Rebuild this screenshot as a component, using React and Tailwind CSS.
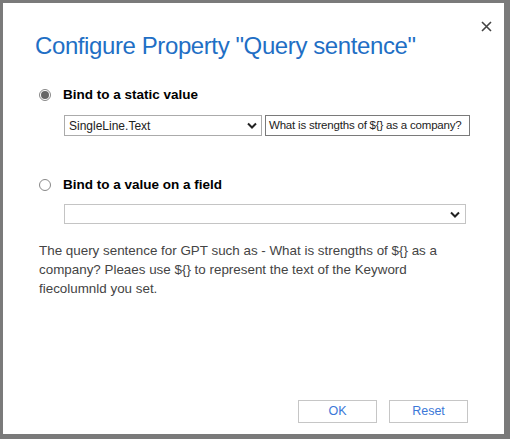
import React from "react";

export default function App() {
  return (
    <div className="w-[510px] h-[439px] bg-[#7a7a7a] pl-[3px] pt-[3px] overflow-hidden" style={{ fontFamily: '"Open Sans", "Liberation Sans", sans-serif' }}>
      <div className="relative w-[501px] h-[431px] bg-white">
        <button className="absolute left-[477px] top-[17px] w-[12px] h-[12px] flex items-center justify-center">
          <svg width="11" height="11" viewBox="0 0 11 11">
            <path d="M1 1 L10 10 M10 1 L1 10" stroke="#444" strokeWidth="1.6" />
          </svg>
        </button>
        <div className="pl-[32px] pt-[28px]">
          <h1 className="text-[24px] leading-[30px] text-[#1f6fc5] tracking-[-0.4px]" style={{ fontFamily: '"Liberation Sans", sans-serif', fontWeight: 400 }}>
            Configure Property "Query sentence"
          </h1>
        </div>
        <div className="pl-[36px] mt-[25px]">
          <div className="flex items-center h-[18px]">
            <span className="w-[12px] h-[12px] rounded-full border border-[#888] flex items-center justify-center">
              <span className="w-[8px] h-[8px] rounded-full bg-[#666]" />
            </span>
            <span className="ml-[12px] text-[13.5px] font-bold text-black" style={{ fontFamily: '"Liberation Sans", sans-serif' }}>Bind to a static value</span>
          </div>
          <div className="flex mt-[11px] ml-[25px]">
            <div className="w-[198px] h-[21px] border border-[#ababab] flex items-center justify-between px-[4px]">
              <span className="text-[12px] text-[#222]" style={{ fontFamily: '"Liberation Sans", sans-serif' }}>SingleLine.Text</span>
              <svg width="10" height="7" viewBox="0 0 10 7"><path d="M1 1.5 L5 5.5 L9 1.5" stroke="#222" strokeWidth="2" fill="none" /></svg>
            </div>
            <div className="ml-[3px] w-[205px] h-[21px] border border-[#7a7a7a] flex items-center px-[3px] overflow-hidden">
              <span className="text-[11.5px] tracking-[-0.2px] text-[#222] whitespace-nowrap" style={{ fontFamily: '"Liberation Sans", sans-serif' }}>What is strengths of ${"{}"} as a company?</span>
            </div>
          </div>
          <div className="flex items-center h-[18px] mt-[40px]">
            <span className="w-[12px] h-[12px] rounded-full border border-[#888]" />
            <span className="ml-[12px] text-[13.5px] font-bold text-black" style={{ fontFamily: '"Liberation Sans", sans-serif' }}>Bind to a value on a field</span>
          </div>
          <div className="mt-[10px] ml-[25px] w-[402px] h-[20px] border border-[#c4c4c4] flex items-center justify-end px-[5px]">
            <svg width="10" height="7" viewBox="0 0 10 7"><path d="M1 1.5 L5 5.5 L9 1.5" stroke="#222" strokeWidth="2" fill="none" /></svg>
          </div>
        </div>
        <p className="ml-[36px] mt-[17px] w-[420px] text-[13.4px] leading-[19px] text-[#444]" style={{ fontFamily: '"Liberation Sans", sans-serif' }}>
          The query sentence for GPT such as - What is strengths of ${"{}"} as a company? Pleaes use ${"{}"} to represent the text of the Keyword fiecolumnld you set.
        </p>
        <div className="absolute left-[295px] top-[397px] flex gap-[12px]">
          <button className="w-[79px] h-[23px] border border-[#c6c6c6] text-[12.5px] text-[#3b78d8] bg-white" style={{ fontFamily: '"Liberation Sans", sans-serif' }}>OK</button>
          <button className="w-[79px] h-[23px] border border-[#c6c6c6] text-[12.5px] text-[#3b78d8] bg-white" style={{ fontFamily: '"Liberation Sans", sans-serif' }}>Reset</button>
        </div>
      </div>
    </div>
  );
}
